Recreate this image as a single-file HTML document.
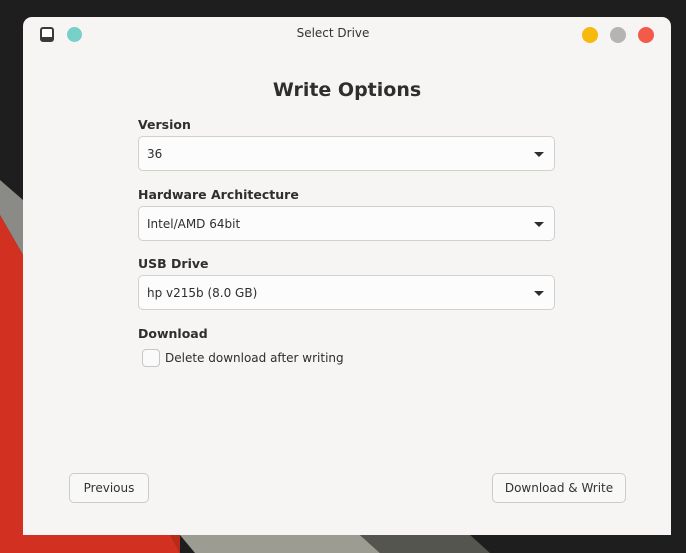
<!DOCTYPE html>
<html><head><style>
*{margin:0;padding:0;box-sizing:border-box}
body{width:686px;height:553px;overflow:hidden;background:#1e1e1e;position:relative;font-family:"DejaVu Sans","Liberation Sans",sans-serif;color:#2e2e2e}
svg.bg{position:absolute;left:0;top:0}
.win{position:absolute;left:23px;top:17px;width:648px;height:518px;background:#f6f5f4;border-radius:9px 9px 0 0}
.title{position:absolute;top:9px;left:249px;width:122px;text-align:center;font-size:12px;color:#333}
.dot{position:absolute;width:16px;height:16px;border-radius:50%;top:10px}
h1{position:absolute;top:62px;width:100%;text-align:center;font-size:19px;font-weight:bold;color:#2e2e2e}
.lbl{position:absolute;left:115px;font-size:12.5px;font-weight:bold;color:#2e2e2e}
.combo{position:absolute;left:115px;width:417px;height:35px;background:#fcfcfc;border:1px solid #d2d0cd;border-radius:5px;font-size:12px;padding:10px 0 0 8px;color:#2e2e2e}
.combo:after{content:"";position:absolute;right:10px;top:15px;border-left:5px solid transparent;border-right:5px solid transparent;border-top:5px solid #2e2e2e}
.btn{position:absolute;top:456px;height:30px;border:1px solid #cdcbc8;border-radius:5px;background:#f8f8f7;font-size:12px;text-align:center;padding-top:7px;color:#333}
</style></head><body>
<svg class="bg" width="686" height="553">
<polygon points="0,180 0,215 23,255 23,200" fill="#8a8a86"/>
<polygon points="0,215 0,553 180,553 23,255" fill="#d23020"/>
<polygon points="23,255 23,535 180,535 180,553" fill="#b82a1a"/>
<polygon points="180,535 360,535 380,553 195,553" fill="#9c9c92"/>
<polygon points="360,535 470,535 490,553 380,553" fill="#55554f"/>
</svg>
<div class="win">
<svg style="position:absolute;left:17px;top:10px" width="14" height="16"><rect x="1" y="1" width="12" height="13" rx="2" fill="#fff" stroke="#3a3a3a" stroke-width="2"/><rect x="2" y="10" width="10" height="3" fill="#3a3a3a"/></svg>
<div class="dot" style="left:44px;background:#76d0c8;width:15px;height:15px"></div>
<div class="title">Select Drive</div>
<div class="dot" style="left:559px;background:#f6b90c"></div>
<div class="dot" style="left:587px;background:#b4b4b4"></div>
<div class="dot" style="left:615px;background:#f35a4a"></div>
<h1>Write Options</h1>
<div class="lbl" style="top:100px">Version</div>
<div class="combo" style="top:119px">36</div>
<div class="lbl" style="top:170px">Hardware Architecture</div>
<div class="combo" style="top:189px">Intel/AMD 64bit</div>
<div class="lbl" style="top:239px">USB Drive</div>
<div class="combo" style="top:258px">hp v215b (8.0 GB)</div>
<div class="lbl" style="top:309px">Download</div>
<div style="position:absolute;left:119px;top:332px;width:18px;height:18px;border:1px solid #c8c6c3;border-radius:4px;background:#fafafa"></div>
<div style="position:absolute;left:142px;top:334px;font-size:12px">Delete download after writing</div>
<div class="btn" style="left:46px;width:80px">Previous</div>
<div class="btn" style="left:469px;width:134px">Download &amp; Write</div>
</div>
</body></html>
